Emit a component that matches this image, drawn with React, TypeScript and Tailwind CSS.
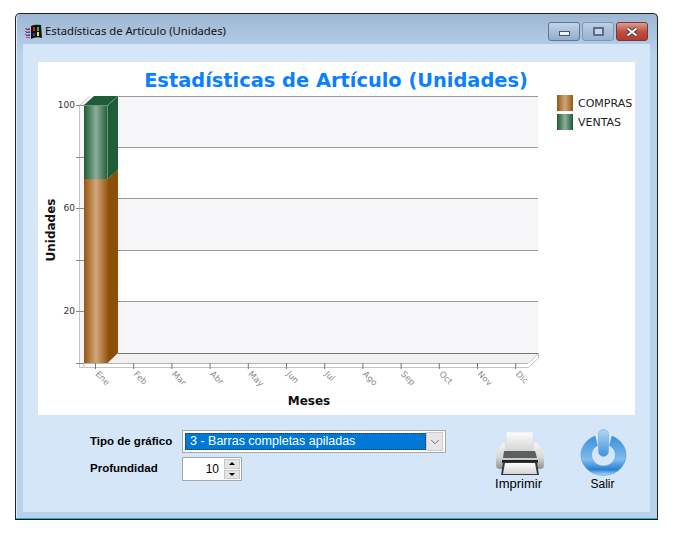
import { ChevronDown } from "lucide-react";

const months = ["Ene", "Feb", "Mar", "Abr", "May", "Jun", "Jul", "Ago", "Sep", "Oct", "Nov", "Dic"];
const gridY = [96, 147, 198, 250, 301, 353];
const yLabels = [
  { v: "100", y: 105 },
  { v: "60", y: 208 },
  { v: "20", y: 311 },
];
const yTicks = [105, 157, 208, 260, 311, 363];

function WinLogo() {
  return (
    <svg width="17" height="16" viewBox="0 0 17 16" className="shrink-0">
      <path d="M6 2 Q10 0 16 1 L17 14 Q11 12 6 15 Z" fill="#111" />
      <rect x="8" y="3" width="2" height="4" fill="#e02020" />
      <rect x="12" y="3" width="2" height="4" fill="#30c030" />
      <rect x="8" y="9" width="2" height="3" fill="#2040e0" />
      <rect x="12" y="8" width="2" height="4" fill="#f0e020" />
      <path d="M0 4h2v1H0zM3 4h2v1H3zM0 7h2v1H0zM3 7h2v1H3zM0 10h2v1H0zM3 10h2v1H3zM1 13h2v1H1zM3 13h2v1H3z" fill="#e04040" />
      <path d="M1 5h4v1H1zM1 8h4v1H1zM1 11h4v1H1z" fill="#2050d0" />
    </svg>
  );
}

function CaptionButtons() {
  return (
    <div className="flex gap-[2px] mr-[9px]">
      <div className="w-[32px] h-[19px] rounded-[3px] border border-[#5f7692] bg-gradient-to-b from-[#c3d4e7] via-[#a9c0da] to-[#90aecf] flex items-center justify-center">
        <div className="w-[11px] h-[5px] mt-[3px] bg-[#eef2f6] border border-[#44546a]" />
      </div>
      <div className="w-[32px] h-[19px] rounded-[3px] border border-[#7f97b3] bg-gradient-to-b from-[#bdd0e5] via-[#a9c0da] to-[#98b4d3] flex items-center justify-center">
        <div className="w-[11px] h-[9px] border-2 border-[#5d6d84] bg-[#c8d6e6]" />
      </div>
      <div className="w-[32px] h-[19px] rounded-[3px] border border-[#6e3a3e] bg-gradient-to-b from-[#dc9c90] via-[#c0503f] to-[#b8392e] flex items-center justify-center">
        <svg width="14" height="10" viewBox="0 0 14 10">
          <path d="M2.5 1.5 L11.5 8.5 M11.5 1.5 L2.5 8.5" stroke="#3c3c44" strokeWidth="3.6" />
          <path d="M2.5 1.5 L11.5 8.5 M11.5 1.5 L2.5 8.5" stroke="#f4f4f4" strokeWidth="2.2" />
        </svg>
      </div>
    </div>
  );
}

function Chart() {
  return (
    <svg viewBox="38 62 597 353" className="block w-[597px] h-[353px] bg-white font-['DejaVu_Sans']">
      <defs>
        <linearGradient id="orange" x1="0" x2="1" y1="0" y2="0">
          <stop offset="0" stopColor="#97560f" />
          <stop offset="0.5" stopColor="#d0a77c" />
          <stop offset="1" stopColor="#97560f" />
        </linearGradient>
        <linearGradient id="green" x1="0" x2="1" y1="0" y2="0">
          <stop offset="0" stopColor="#1e5a36" />
          <stop offset="0.5" stopColor="#8cb09b" />
          <stop offset="1" stopColor="#1e5a36" />
        </linearGradient>
      </defs>

      <text x="336" y="87" textAnchor="middle" fontSize="19.4" fontWeight="700" fill="#0a80ff">
        Estadísticas de Artículo (Unidades)
      </text>

      {/* paredes */}
      <rect x="118" y="96" width="420" height="257" fill="#ffffff" />
      {[96, 198, 301].map((y) => (
        <rect key={y} x="118" y={y} width="420" height={y === 96 ? 51 : 52} fill="#f6f6f9" />
      ))}
      <path d="M79 105 L89 96 L118 96 L118 353 L84 363 L79 363 Z" fill="#f6f6f6" />
      <path d="M79.5 105.5 L89 96.5" stroke="#cfcfcf" fill="none" />
      <path d="M80 364 L118 353 L538 353 L528 363 L528 364 Z" fill="#f1f1f1" />
      {gridY.map((y) => (
        <line key={y} x1="118" x2="538" y1={y + 0.5} y2={y + 0.5} stroke={y === 353 ? "#777777" : "#9a9a9a"} />
      ))}

      {/* suelo */}
      <path d="M528.5 363.5 L538.5 353.5 L538.5 358 L528.5 367.5 L79.5 367.5 L79.5 105.5" fill="none" stroke="#c4c4c4" />
      <line x1="79" x2="528" y1="363.5" y2="363.5" stroke="#b5b5b5" />
      <line x1="84" x2="84" y1="363" y2="367" stroke="#bbbbbb" />

      {yTicks.map((y) => (
        <line key={y} x1="76" x2="84" y1={y + 0.5} y2={y + 0.5} stroke="#8a8a8a" />
      ))}
      {yLabels.map((l) => (
        <text key={l.v} x="75" y={l.y + 3} textAnchor="end" fontSize="9" fill="#333333">
          {l.v}
        </text>
      ))}

      {/* barra */}
      <path d="M107.5 179 L118 170 L118 353 L107.5 363 Z" fill="#8c4f08" />
      <path d="M107.5 105 L118 96 L118 170 L107.5 179 Z" fill="#1f5c38" />
      <path d="M84 105 L94 96 L118 96 L107.5 105 Z" fill="#1f5c38" />
      <rect x="84" y="179" width="24" height="184" fill="url(#orange)" />
      <rect x="84" y="105" width="24" height="74" fill="url(#green)" />
      <path d="M84 105.5 H107.5 L117.5 96.5 M107.5 105 V179" stroke="#6d927c" fill="none" />

      {months.map((m, i) => {
        const x = 95.5 + i * 38.2;
        return (
          <g key={m}>
            <line x1={x} x2={x} y1="363" y2="369" stroke="#777777" />
            <text
              x={x + 4}
              y="370"
              fontSize="8.5"
              fill="#8a8a8a"
              transform={`rotate(45 ${x + 4} 370)`}
              dominantBaseline="hanging"
            >
              {m}
            </text>
          </g>
        );
      })}

      <text x="309" y="405" textAnchor="middle" fontSize="12" fontWeight="700" fill="#111111">
        Meses
      </text>
      <text
        x="54.5"
        y="230"
        textAnchor="middle"
        fontSize="12"
        fontWeight="700"
        fill="#111111"
        transform="rotate(-90 54.5 230)"
      >
        Unidades
      </text>

      {/* leyenda */}
      <rect x="557" y="95" width="16" height="16" fill="url(#orange)" />
      <rect x="557" y="114" width="16" height="16" fill="url(#green)" />
      <text x="578" y="107" fontSize="11" fill="#222222">COMPRAS</text>
      <text x="578" y="126" fontSize="11" fill="#222222">VENTAS</text>
    </svg>
  );
}

function PrinterIcon() {
  return (
    <svg width="48" height="44" viewBox="0 0 48 44">
      <defs>
        <linearGradient id="pbody" x1="0" x2="0" y1="0" y2="1">
          <stop offset="0" stopColor="#f4f5f3" />
          <stop offset="0.55" stopColor="#d5d7d4" />
          <stop offset="1" stopColor="#8f9290" />
        </linearGradient>
        <linearGradient id="ppaper" x1="0" x2="0" y1="0" y2="1">
          <stop offset="0" stopColor="#fdfdfd" />
          <stop offset="1" stopColor="#d4d4d4" />
        </linearGradient>
      </defs>
      <rect x="10" y="0" width="27" height="19" fill="url(#ppaper)" stroke="#d8d8d8" strokeWidth="0.5" />
      <path d="M7 11 H9 V19 H38 V11 H41 L46 18 Q48 20 48 24 V33 Q48 37 44 37 H4 Q0 37 0 33 V24 Q0 20 2 18 Z" fill="url(#pbody)" />
      <path d="M8 19 H39 L41 26 H7 Z" fill="#5c5f5e" />
      <rect x="6" y="28" width="36" height="3" fill="#1f2120" />
      <path d="M7 30 H41 L43 43 H5 Z" fill="#3a3c3b" />
      <path d="M9 31 H39 L41 42 H7 Z" fill="url(#ppaper)" />
    </svg>
  );
}

function PowerIcon() {
  return (
    <svg width="48" height="47" viewBox="0 0 48 47">
      <defs>
        <linearGradient id="pw" x1="0" x2="0" y1="0" y2="1">
          <stop offset="0" stopColor="#3b8fdc" />
          <stop offset="0.6" stopColor="#7fbdec" />
          <stop offset="0.85" stopColor="#2a80d4" />
          <stop offset="1" stopColor="#b8def8" />
        </linearGradient>
        <linearGradient id="pwbar" x1="0" x2="0" y1="0" y2="1">
          <stop offset="0" stopColor="#b4d6f1" />
          <stop offset="1" stopColor="#3e92da" />
        </linearGradient>
      </defs>
      <path
        d="M15 7 A22.5 20.5 0 1 0 32 7 L29.5 16.5 A12 11 0 1 1 17.5 16.5 Z"
        fill="url(#pw)"
        stroke="#3f8fd4"
        strokeWidth="0.5"
      />
      <rect x="18.5" y="0.5" width="10" height="27" rx="5" fill="url(#pwbar)" stroke="#5aa2df" strokeWidth="0.5" />
    </svg>
  );
}

export default function App() {
  return (
    <div className="w-[690px] h-[553px] bg-white pt-[13px] pl-[15px] overflow-hidden font-['Liberation_Sans',sans-serif]">
      <div className="w-[643px] h-[506px] rounded-t-[5px] border border-[#222222] border-b-[#12b5cb] shadow-[0_1px_0_#111111,inset_1px_0_0_#e4edf6] bg-gradient-to-b from-[#9db6d2] from-0% to-[#b9d2ec] to-[8%] flex flex-col">
        {/* barra de titulo */}
        <div className="h-[30px] shrink-0 flex items-center justify-between pl-[9px] pt-[5px]">
          <div className="flex items-center gap-[3px]">
            <WinLogo />
            <span className="text-[11.25px] text-[#111111] font-['Noto_Sans',sans-serif]">
              Estadísticas de Artículo (Unidades)
            </span>
          </div>
          <CaptionButtons />
        </div>

        {/* area cliente */}
        <div className="flex-1 mx-[7px] mb-[6px] bg-[#d6e6f9] pt-[18px] pl-[15px]">
          <Chart />

          <div className="flex">
            <div className="w-[430px] pl-[52px] pt-[15px] flex flex-col gap-[4px]">
              <div className="flex items-center h-[23px]">
                <span className="w-[92px] text-[11.5px] font-bold text-black">Tipo de gráfico</span>
                <div className="w-[264px] h-[23px] border border-[#a8a8a8] bg-white flex items-center p-[2px]">
                  <div className="flex-1 h-[17px] bg-[#0078d7] border border-dotted border-[#333333] pl-[4px] text-[12.5px] leading-[15px] text-white">
                    3 - Barras completas apiladas
                  </div>
                  <div className="w-[17px] h-[19px] bg-[#e6e6e6] border border-[#cccccc] flex items-center justify-center">
                    <ChevronDown size={14} strokeWidth={1.25} className="text-[#444444]" />
                  </div>
                </div>
              </div>
              <div className="flex items-center h-[24px]">
                <span className="w-[92px] text-[11.5px] font-bold text-black">Profundidad</span>
                <div className="w-[60px] h-[24px] border border-[#a8a8a8] bg-white flex items-center justify-end pr-[1px]">
                  <span className="text-[12px] mr-[5px] text-black">10</span>
                  <div className="w-[16px] h-[20px] flex flex-col gap-[1px]">
                    <div className="flex-1 bg-[#e4e4e4] border border-[#c8c8c8] flex items-center justify-center">
                      <div className="w-0 h-0 border-x-[3px] border-x-transparent border-b-[3px] border-b-black" />
                    </div>
                    <div className="flex-1 bg-[#e4e4e4] border border-[#c8c8c8] flex items-center justify-center">
                      <div className="w-0 h-0 border-x-[3px] border-x-transparent border-t-[3px] border-t-black" />
                    </div>
                  </div>
                </div>
              </div>
            </div>

            <div className="flex flex-col items-center w-[48px] ml-[28px] pt-[17px]">
              <PrinterIcon />
              <span className="text-[13px] leading-[15px] text-black mr-[3px]">Imprimir</span>
            </div>
            <div className="flex flex-col items-center w-[48px] ml-[36px] pt-[14px]">
              <PowerIcon />
              <span className="text-[12px] leading-[14px] text-black mt-[1px] mr-[3px]">Salir</span>
            </div>
          </div>
        </div>
      </div>
    </div>
  );
}
